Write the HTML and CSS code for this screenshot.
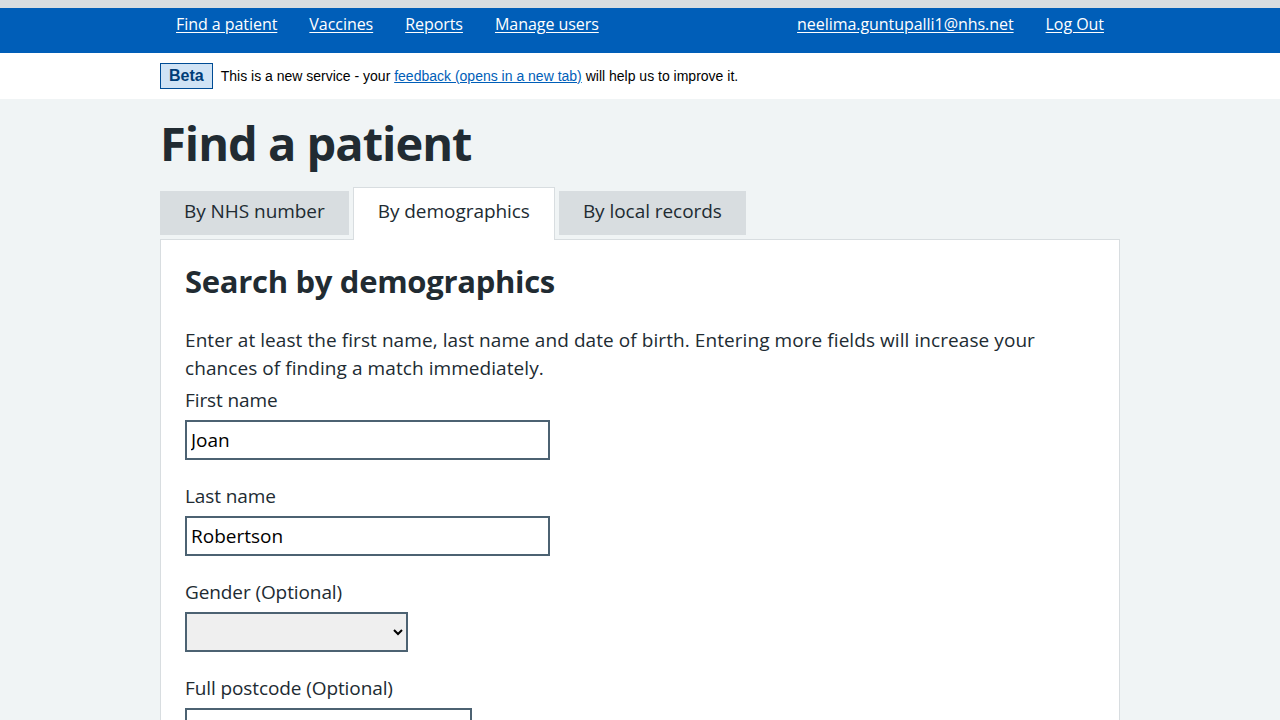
FILE: index.html
```html
<!DOCTYPE html>
<html lang="en">
<head>
<meta charset="utf-8">
<title>Find a patient</title>
<link rel="stylesheet" href="styles.css">
</head>
<body>
<div class="topstrip"></div>
<header class="header">
  <div class="container header-inner">
    <nav class="nav">
      <a href="#">Find a patient</a>
      <a href="#">Vaccines</a>
      <a href="#">Reports</a>
      <a href="#">Manage users</a>
    </nav>
    <nav class="nav">
      <a href="#">neelima.guntupalli1@nhs.net</a>
      <a href="#">Log Out</a>
    </nav>
  </div>
</header>
<div class="beta">
  <div class="container beta-inner">
    <strong class="beta-tag">Beta</strong>
    <span class="beta-text">This is a new service - your <a href="#">feedback (opens in a new tab)</a> will help us to improve it.</span>
  </div>
</div>
<main class="container main">
  <h1 class="title">Find a patient</h1>
  <div class="tabs">
    <a class="tab" href="#">By NHS number</a>
    <a class="tab active" href="#">By demographics</a>
    <a class="tab" href="#">By local records</a>
  </div>
  <section class="panel">
    <h2 class="panel-title">Search by demographics</h2>
    <p class="hint">Enter at least the first name, last name and date of birth. Entering more fields will increase your chances of finding a match immediately.</p>
    <div class="field">
      <label class="label">First name</label>
      <input class="input input-name" type="text" value="Joan">
    </div>
    <div class="field">
      <label class="label">Last name</label>
      <input class="input input-name" type="text" value="Robertson">
    </div>
    <div class="field">
      <label class="label">Gender (Optional)</label>
      <select class="select"><option></option></select>
    </div>
    <div class="field">
      <label class="label">Full postcode (Optional)</label>
      <input class="input input-post" type="text" value="">
    </div>
  </section>
</main>
</body>
</html>
```

FILE: styles.css
```css
* { box-sizing: border-box; }
html, body { margin: 0; padding: 0; }
body {
  background: #f0f4f5;
  font-family: "Open Sans", "Noto Sans", sans-serif;
  color: #212b32;
}
.container { width: 960px; margin: 0 auto; }
.topstrip { height: 8px; background: #d8dde0; }
.header { background: #005eb8; height: 45px; }
.header-inner { display: flex; justify-content: space-between; }
.nav { display: flex; }
.nav a {
  color: #fff;
  font-size: 16px;
  line-height: 32px;
  padding: 0 16px;
  letter-spacing: -0.05px;
  text-decoration: underline;
  text-underline-offset: 2px;
}
.beta { background: #fff; height: 46px; }
.beta-inner { display: flex; align-items: center; padding-top: 10px; gap: 8px; }
.beta-tag {
  font-family: "Liberation Sans", Arial, sans-serif;
  font-size: 16px;
  font-weight: bold;
  color: #003d78;
  background: #d0e3f5;
  border: 1px solid #004c95;
  padding: 0 8px;
  height: 26px;
  line-height: 24px;
}
.beta-text {
  font-family: "Liberation Sans", Arial, sans-serif;
  font-size: 14px;
  color: #000;
}
.beta-text a { color: #005eb8; }
.main { padding-top: 16px; }
.title {
  font-size: 47px;
  font-weight: 700;
  line-height: 56px;
  margin: 0 0 16px;
  letter-spacing: -1px;
}
.tabs { display: flex; gap: 4px; align-items: flex-end; height: 53px; margin-bottom: -1px; }
.tab {
  background: #d8dde0;
  color: #212b32;
  text-decoration: none;
  font-size: 19px;
  height: 44px;
  line-height: 40px;
  padding: 0 24px;
  margin-bottom: 5px;
  letter-spacing: -0.05px;
}
.tab.active {
  background: #fff;
  border: 1px solid #d8dde0;
  border-bottom: none;
  height: 53px;
  line-height: 46px;
  margin-bottom: 0;
  position: relative;
  z-index: 1;
}
.panel {
  background: #fff;
  border: 1px solid #d8dde0;
  padding: 21px 24px 40px;
  min-height: 600px;
}
.panel-title {
  font-size: 31px;
  font-weight: 700;
  line-height: 40px;
  margin: 0 0 25px;
  letter-spacing: -0.3px;
}
.hint {
  font-size: 19px;
  line-height: 28px;
  margin: 0 0 4px;
  letter-spacing: 0.07px;
}
.field { margin-bottom: 22px; display: flex; flex-direction: column; align-items: flex-start; }
.label { font-size: 19px; line-height: 28px; margin-bottom: 6px; letter-spacing: -0.1px; }
.input {
  height: 40px;
  border: 2px solid #4c6272;
  font-family: "Open Sans", "Noto Sans", sans-serif;
  font-size: 19px;
  padding: 0 4px;
  color: #000;
  background: #fff;
}
.input-name { width: 365px; }
.input-post { width: 287px; }
.select {
  width: 223px;
  height: 40px;
  border: 2px solid #4c6272;
  background: #efefef;
  font-size: 19px;
}
```
